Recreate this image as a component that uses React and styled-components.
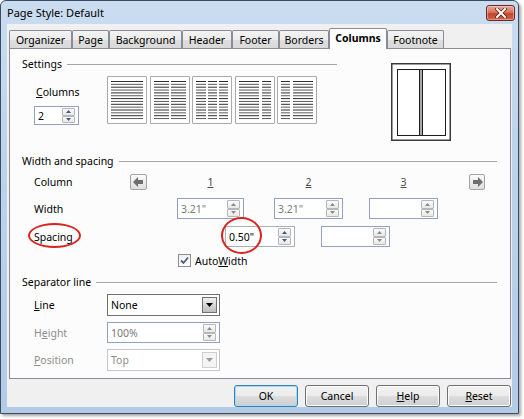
import React from 'react';
import styled, { createGlobalStyle } from 'styled-components';

const Global = createGlobalStyle`
  html, body { margin: 0; padding: 0; background: #ffffff; }
  body {
    width: 524px; height: 419px; overflow: hidden;
    font-family: "Noto Sans", "DejaVu Sans", sans-serif;
    font-size: 10.5px; line-height: 14px; color: #000;
  }
  * { box-sizing: border-box; }
`;

const Window = styled.div`
  width: 519px;
  height: 414px;
  border: 1px solid #3c4d62;
  border-radius: 6px 6px 0 0;
  background: linear-gradient(180deg, #cadcf0 0%, #bcd3ec 40%, #b2cbe7 100%);
  box-shadow: 2px 2px 3px rgba(0, 0, 0, 0.35);
  display: flex;
  flex-direction: column;
  padding: 0 6px 6px 6px;
`;

const TitleBar = styled.div`
  height: 23px;
  display: flex;
  align-items: flex-start;
  justify-content: space-between;
`;

const Title = styled.div`
  font-size: 11px;
  line-height: 14px;
  margin-top: 5px;
  color: #000;
`;

const CloseBtn = styled.div`
  width: 29px;
  height: 16px;
  margin-top: 4px;
  margin-right: -3px;
  border: 1px solid #6b2a22;
  border-radius: 3px;
  background: linear-gradient(180deg, #e9a899 0%, #d8735f 45%, #c4442c 55%, #d0664a 100%);
  box-shadow: inset 0 0 0 1px rgba(255, 255, 255, 0.35);
  display: flex;
  align-items: center;
  justify-content: center;
`;

const Client = styled.div`
  flex: 1;
  background: #f0f0f0;
  display: flex;
  flex-direction: column;
  padding: 4px 1px 0 2px;
`;

const TabRow = styled.div`
  height: 20px;
  display: flex;
  align-items: flex-end;
`;

const Tab = styled.div`
  width: ${(p) => p.$w}px;
  height: ${(p) => (p.$active ? 21 : 18)}px;
  margin-bottom: ${(p) => (p.$active ? -1 : 0)}px;
  position: relative;
  z-index: ${(p) => (p.$active ? 2 : 0)};
  border: 1px solid #898c95;
  border-bottom: none;
  border-radius: 2px 2px 0 0;
  background: ${(p) =>
    p.$active ? '#fcfcfc' : 'linear-gradient(180deg, #f3f3f3 0%, #ebebeb 50%, #dedede 51%, #d9d9d9 100%)'};
  font-weight: ${(p) => (p.$active ? 700 : 400)};
  display: flex;
  align-items: center;
  justify-content: center;
  padding-bottom: ${(p) => (p.$active ? 2 : 0)}px;
`;

const Panel = styled.div`
  width: 502px;
  height: 331px;
  border: 1px solid #898c95;
  background: #fcfcfc;
  padding: 8px 13px 0 12px;
  display: flex;
  flex-direction: column;
`;

const SectionHeader = styled.div`
  display: flex;
  align-items: center;
  gap: 5px;
  height: 14px;
  margin-top: ${(p) => p.$mt || 0}px;
`;

const HeaderRule = styled.div`
  flex: 1;
  height: 1px;
  background: #a5a5a5;
`;

const SettingsRow = styled.div`
  display: flex;
  align-items: flex-start;
`;

const SettingsLeft = styled.div`
  width: 315px;
  display: flex;
  flex-direction: column;
`;

const SettingsBody = styled.div`
  display: flex;
  align-items: flex-start;
  padding-left: 12px;
`;

const ColumnsField = styled.div`
  width: 45px;
  display: flex;
  flex-direction: column;
  padding-top: 14px;
`;

const Label = styled.div`
  color: ${(p) => (p.$disabled ? '#8d8d8d' : '#000')};
  padding-left: ${(p) => p.$pl || 0}px;
  display: flex;
  align-items: center;
  position: relative;
  height: ${(p) => (p.$h ? `${p.$h}px` : 'auto')};
`;

const Presets = styled.div`
  display: flex;
  gap: 2.5px;
  margin-left: 28px;
  margin-top: 5px;
`;

const PresetBox = styled.div`
  width: 40px;
  height: 48px;
  border: 1px solid #aaaaaa;
  border-radius: 1px;
  background: #ffffff;
  display: flex;
`;

const Preview = styled.div`
  margin-left: 54px;
  margin-top: 6px;
  width: 60px;
  height: 78px;
  display: flex;
`;

const WidthGrid = styled.div`
  margin-top: 5px;
  margin-left: 12px;
  display: grid;
  grid-template-columns: 96px 17px 30px 48px 19px 30px 21px 26px 22px 26px 21px 48px 31px 16px;
  grid-template-rows: 18px 21px 21px 13px;
  row-gap: 7px;
`;

const Cell = styled.div`
  grid-column: ${(p) => p.$col};
  grid-row: ${(p) => p.$row};
  display: flex;
  align-items: center;
  justify-content: ${(p) => p.$justify || 'flex-start'};
  position: relative;
`;

const ColNum = styled.span`
  text-decoration: underline;
  color: #4a4a4a;
`;

const ArrowBtn = styled.div`
  width: 17px;
  height: 16px;
  border: 1px solid #a3a3a3;
  border-radius: 2px;
  background: linear-gradient(180deg, #fbfbfb 0%, #ececec 50%, #dedede 100%);
  display: flex;
  align-items: center;
  justify-content: center;
`;

const SpinBox = styled.div`
  width: ${(p) => (p.$w ? `${p.$w}px` : '100%')};
  height: ${(p) => p.$h || 21}px;
  border: 1px solid ${(p) => p.$border || '#8ea3c2'};
  background: #ffffff;
  display: flex;
  align-items: stretch;
  position: relative;
`;

const SpinValue = styled.div`
  flex: 1;
  display: flex;
  align-items: center;
  padding-left: 3px;
  color: ${(p) => (p.$disabled ? '#7a7a7a' : '#000')};
`;

const SpinButtons = styled.div`
  width: 13px;
  margin: 1px 3px 1px 0;
  display: flex;
  flex-direction: column;
`;

const SpinHalf = styled.div`
  flex: 1;
  border: 1px solid #b6b6b6;
  border-radius: 1px;
  background: linear-gradient(180deg, #fafafa 0%, #e8e8e8 100%);
  display: flex;
  align-items: center;
  justify-content: center;
`;

const CheckBox = styled.div`
  width: 13px;
  height: 13px;
  margin-left: 1px;
  border: 1px solid #8e8f8f;
  background: linear-gradient(180deg, #f0f0f0 0%, #ffffff 100%);
  display: flex;
  align-items: center;
  justify-content: center;
`;

const CheckLabel = styled.span`
  margin-left: 4px;
`;

const Ellipse = styled.div`
  position: absolute;
  left: ${(p) => p.$l}px;
  top: ${(p) => p.$t}px;
  width: ${(p) => p.$w}px;
  height: ${(p) => p.$h}px;
  border: 2px solid #d8231e;
  border-radius: 50%;
  pointer-events: none;
`;

const SepGrid = styled.div`
  margin-top: 5px;
  margin-left: 12px;
  display: grid;
  grid-template-columns: 73px 113px;
  grid-template-rows: 22px 21px 22px;
  row-gap: 6px;
  align-items: stretch;
`;

const Dropdown = styled.div`
  height: 22px;
  border: 1px solid ${(p) => (p.$disabled ? '#c6c6c6' : '#707070')};
  background: #ffffff;
  display: flex;
  align-items: stretch;
`;

const DropValue = styled.div`
  flex: 1;
  display: flex;
  align-items: center;
  padding-left: 3px;
  color: ${(p) => (p.$disabled ? '#8d8d8d' : '#000')};
`;

const DropButton = styled.div`
  width: 15px;
  margin: 2px 2px 2px 0;
  border: 1px solid ${(p) => (p.$disabled ? '#cfcfcf' : '#707070')};
  background: ${(p) =>
    p.$disabled ? '#f4f4f4' : 'linear-gradient(180deg, #f0f0f0 0%, #d6d6d6 50%, #bdbdbd 100%)'};
  display: flex;
  align-items: center;
  justify-content: center;
`;

const ButtonRow = styled.div`
  display: flex;
  justify-content: flex-end;
  gap: 7px;
  margin-top: 6px;
  padding-right: 0;
`;

const Button = styled.div`
  width: 64px;
  height: 22px;
  border: 1px solid ${(p) => (p.$default ? '#3c7fb1' : '#707070')};
  border-radius: 3px;
  background: linear-gradient(180deg, #f2f2f2 0%, #ebebeb 50%, #dddddd 51%, #cfcfcf 100%);
  box-shadow: ${(p) => (p.$default ? 'inset 0 0 0 1px #9fdcf6' : 'inset 0 0 0 1px #fcfcfc')};
  display: flex;
  align-items: center;
  justify-content: center;
`;

const U = styled.span`
  text-decoration: underline;
`;

const Tri = ({ up, color }) => (
  <svg width="5" height="3" viewBox="0 0 5 3">
    <polygon points={up ? '0,3 5,3 2.5,0' : '0,0 5,0 2.5,3'} fill={color} />
  </svg>
);

const Spin = ({ value, disabled, w, h, border, arrow = '#8a8a8a', children }) => (
  <SpinBox $w={w} $h={h} $border={border}>
    <SpinValue $disabled={disabled}>{value}</SpinValue>
    <SpinButtons>
      <SpinHalf>
        <Tri up color={arrow} />
      </SpinHalf>
      <SpinHalf>
        <Tri color={arrow} />
      </SpinHalf>
    </SpinButtons>
    {children}
  </SpinBox>
);

const presetCols = [
  [[4, 36]],
  [[4, 19], [21, 36]],
  [[4, 14], [16, 25], [27, 36]],
  [[4, 24], [27, 36]],
  [[4, 13], [16, 36]],
];

const PresetIcon = ({ cols }) => {
  const ys = [];
  for (let i = 0; i < 14; i++) ys.push(4.5 + i * 2.85);
  return (
    <PresetBox>
      <svg width="38" height="46" viewBox="0 0 38 46">
        {cols.map(([a, b], ci) =>
          ys.map((y, i) => (
            <line
              key={`${ci}-${i}`}
              x1={a - 1}
              x2={b - 1}
              y1={y}
              y2={y}
              stroke={i % 2 === 0 ? '#2e2e2e' : '#5a5a5a'}
              strokeWidth="1"
            />
          ))
        )}
      </svg>
    </PresetBox>
  );
};

const Arrow = ({ dir }) => (
  <svg width="11" height="10" viewBox="0 0 11 10">
    <polygon
      points={dir === 'left' ? '0,5 5,0 5,3 10,3 10,7 5,7 5,10' : '11,5 6,0 6,3 1,3 1,7 6,7 6,10'}
      fill="#6e6e6e"
    />
  </svg>
);

const tabs = [
  ['Organizer', 63],
  ['Page', 37],
  ['Background', 73],
  ['Header', 50],
  ['Footer', 47],
  ['Borders', 50],
  ['Columns', 58],
  ['Footnote', 57],
];

export default function App() {
  return (
    <>
      <Global />
      <Window>
        <TitleBar>
          <Title>Page Style: Default</Title>
          <CloseBtn>
            <svg width="12" height="10" viewBox="0 0 12 10">
              <path d="M2 1 L10 9 M10 1 L2 9" stroke="#5a1a12" strokeWidth="3.4" strokeLinecap="square" />
              <path d="M2 1 L10 9 M10 1 L2 9" stroke="#ffffff" strokeWidth="2" strokeLinecap="square" />
            </svg>
          </CloseBtn>
        </TitleBar>
        <Client>
          <TabRow>
            {tabs.map(([t, w]) => (
              <Tab key={t} $w={w} $active={t === 'Columns'}>
                {t}
              </Tab>
            ))}
          </TabRow>
          <Panel>
            <SettingsRow>
              <SettingsLeft>
                <SectionHeader>
                  Settings
                  <HeaderRule />
                </SectionHeader>
                <SettingsBody>
                  <ColumnsField>
                    <Label $pl={2}>
                      <span>
                        <U>C</U>olumns
                      </span>
                    </Label>
                    <div style={{ height: 7 }} />
                    <Spin value="2" w={45} h={19} border="#8ea3c2" arrow="#3d5a88" />
                  </ColumnsField>
                  <Presets>
                    {presetCols.map((c, i) => (
                      <PresetIcon key={i} cols={c} />
                    ))}
                  </Presets>
                </SettingsBody>
              </SettingsLeft>
              <Preview>
                <svg width="60" height="78" viewBox="0 0 60 78">
                  <rect x="0.75" y="0.75" width="58.5" height="76.5" fill="#fff" stroke="#3a3a3a" strokeWidth="1.5" />
                  <rect x="6.5" y="6.5" width="48" height="66" fill="#fff" stroke="#1e1e1e" strokeWidth="1" />
                  <rect x="29" y="7" width="2" height="65" fill="#a8a8a8" />
                  <line x1="28.5" y1="6.5" x2="28.5" y2="72.5" stroke="#1e1e1e" strokeWidth="1" />
                  <line x1="31.5" y1="6.5" x2="31.5" y2="72.5" stroke="#1e1e1e" strokeWidth="1" />
                </svg>
              </Preview>
            </SettingsRow>

            <SectionHeader $mt={13}>
              Width and spacing
              <HeaderRule />
            </SectionHeader>
            <WidthGrid>
              <Cell $col="1" $row="1">Column</Cell>
              <Cell $col="2" $row="1">
                <ArrowBtn>
                  <Arrow dir="left" />
                </ArrowBtn>
              </Cell>
              <Cell $col="4 / 6" $row="1" $justify="center">
                <ColNum>1</ColNum>
              </Cell>
              <Cell $col="7 / 10" $row="1" $justify="center">
                <ColNum>2</ColNum>
              </Cell>
              <Cell $col="11 / 13" $row="1" $justify="center">
                <ColNum>3</ColNum>
              </Cell>
              <Cell $col="14" $row="1">
                <ArrowBtn>
                  <Arrow dir="right" />
                </ArrowBtn>
              </Cell>

              <Cell $col="1" $row="2">Width</Cell>
              <Cell $col="4 / 6" $row="2">
                <Spin value={'3.21"'} disabled />
              </Cell>
              <Cell $col="7 / 10" $row="2">
                <Spin value={'3.21"'} disabled />
              </Cell>
              <Cell $col="11 / 13" $row="2">
                <Spin value="" disabled />
              </Cell>

              <Cell $col="1" $row="3">
                Spacing
                <Ellipse $l={-6} $t={-3} $w={53} $h={25} />
              </Cell>
              <Cell $col="5 / 8" $row="3">
                <Spin value={'0.50"'} border="#a9b0ba" arrow="#3d5a88">
                  <Ellipse $l={-5} $t={-10} $w={41} $h={37} />
                </Spin>
              </Cell>
              <Cell $col="9 / 12" $row="3">
                <Spin value="" border="#8ea3c2" />
              </Cell>

              <Cell $col="4 / 10" $row="4">
                <CheckBox>
                  <svg width="9" height="9" viewBox="0 0 9 9">
                    <path d="M1 4.5 L3.5 7 L8 1.5" fill="none" stroke="#4b5f86" strokeWidth="1.8" />
                  </svg>
                </CheckBox>
                <CheckLabel>
                  Auto<U>W</U>idth
                </CheckLabel>
              </Cell>
            </WidthGrid>

            <SectionHeader $mt={8}>
              Separator line
              <HeaderRule />
            </SectionHeader>
            <SepGrid>
              <Label>
                <span>
                  <U>L</U>ine
                </span>
              </Label>
              <Dropdown>
                <DropValue>None</DropValue>
                <DropButton>
                  <svg width="7" height="4" viewBox="0 0 7 4">
                    <polygon points="0,0 7,0 3.5,4" fill="#000" />
                  </svg>
                </DropButton>
              </Dropdown>
              <Label $disabled>
                <span>
                  H<U>e</U>ight
                </span>
              </Label>
              <Spin value="100%" disabled />
              <Label $disabled>
                <span>
                  <U>P</U>osition
                </span>
              </Label>
              <Dropdown $disabled>
                <DropValue $disabled>Top</DropValue>
                <DropButton $disabled>
                  <svg width="7" height="4" viewBox="0 0 7 4">
                    <polygon points="0,0 7,0 3.5,4" fill="#9a9a9a" />
                  </svg>
                </DropButton>
              </Dropdown>
            </SepGrid>
          </Panel>
          <ButtonRow>
            <Button $default>OK</Button>
            <Button>Cancel</Button>
            <Button>
              <span>
                <U>H</U>elp
              </span>
            </Button>
            <Button>
              <span>
                <U>R</U>eset
              </span>
            </Button>
          </ButtonRow>
        </Client>
      </Window>
    </>
  );
}
